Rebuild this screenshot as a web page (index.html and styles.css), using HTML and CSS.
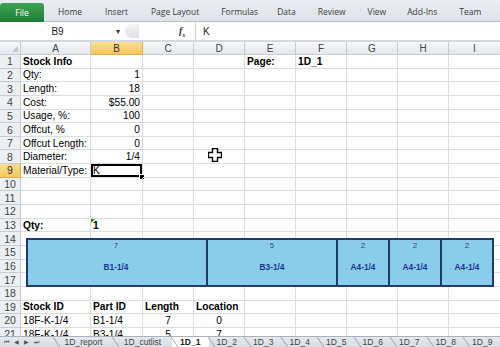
FILE: index.html
```html
<!DOCTYPE html>
<html lang="en">
<head>
    <meta charset="UTF-8">
    <title>1D_1 - Excel</title>
    <link rel="stylesheet" href="styles.css">
</head>
<body>
    <div class="ribbon">
        <div class="file-tab">File</div>
        <div class="tab t-home">Home</div>
        <div class="tab t-insert">Insert</div>
        <div class="tab t-layout">Page Layout</div>
        <div class="tab t-formulas">Formulas</div>
        <div class="tab t-data">Data</div>
        <div class="tab t-review">Review</div>
        <div class="tab t-view">View</div>
        <div class="tab t-addins">Add-Ins</div>
        <div class="tab t-team">Team</div>
    </div>

    <div class="formula-bar">
        <div class="name-box">B9<span class="drop">&#9662;</span></div>
        <div class="grip"></div>
        <div class="fx">f<sub>x</sub></div>
        <div class="formula">K</div>
    </div>

    <div class="sheet">
        <div class="row head">
            <div class="corner"></div>
            <div class="ch">A</div><div class="ch sel">B</div><div class="ch">C</div><div class="ch">D</div><div class="ch">E</div><div class="ch">F</div><div class="ch">G</div><div class="ch">H</div><div class="ch">I</div>
        </div>
        <div class="row"><div class="rh">1</div><div class="c b">Stock Info</div><div class="c"></div><div class="c"></div><div class="c"></div><div class="c b">Page:</div><div class="c b">1D_1</div><div class="c"></div><div class="c"></div><div class="c"></div></div>
        <div class="row"><div class="rh">2</div><div class="c">Qty:</div><div class="c r">1</div><div class="c"></div><div class="c"></div><div class="c"></div><div class="c"></div><div class="c"></div><div class="c"></div><div class="c"></div></div>
        <div class="row"><div class="rh">3</div><div class="c">Length:</div><div class="c r">18</div><div class="c"></div><div class="c"></div><div class="c"></div><div class="c"></div><div class="c"></div><div class="c"></div><div class="c"></div></div>
        <div class="row"><div class="rh">4</div><div class="c">Cost:</div><div class="c r">$55.00</div><div class="c"></div><div class="c"></div><div class="c"></div><div class="c"></div><div class="c"></div><div class="c"></div><div class="c"></div></div>
        <div class="row"><div class="rh">5</div><div class="c">Usage, %:</div><div class="c r">100</div><div class="c"></div><div class="c"></div><div class="c"></div><div class="c"></div><div class="c"></div><div class="c"></div><div class="c"></div></div>
        <div class="row"><div class="rh">6</div><div class="c">Offcut, %</div><div class="c r">0</div><div class="c"></div><div class="c"></div><div class="c"></div><div class="c"></div><div class="c"></div><div class="c"></div><div class="c"></div></div>
        <div class="row"><div class="rh">7</div><div class="c">Offcut Length:</div><div class="c r">0</div><div class="c"></div><div class="c"></div><div class="c"></div><div class="c"></div><div class="c"></div><div class="c"></div><div class="c"></div></div>
        <div class="row"><div class="rh">8</div><div class="c">Diameter:</div><div class="c r">1/4</div><div class="c"></div><div class="c"></div><div class="c"></div><div class="c"></div><div class="c"></div><div class="c"></div><div class="c"></div></div>
        <div class="row"><div class="rh sel">9</div><div class="c">Material/Type:</div><div class="c active">K</div><div class="c"></div><div class="c"></div><div class="c"></div><div class="c"></div><div class="c"></div><div class="c"></div><div class="c"></div></div>
        <div class="row"><div class="rh">10</div><div class="c"></div><div class="c"></div><div class="c"></div><div class="c"></div><div class="c"></div><div class="c"></div><div class="c"></div><div class="c"></div><div class="c"></div></div>
        <div class="row"><div class="rh">11</div><div class="c"></div><div class="c"></div><div class="c"></div><div class="c"></div><div class="c"></div><div class="c"></div><div class="c"></div><div class="c"></div><div class="c"></div></div>
        <div class="row"><div class="rh">12</div><div class="c"></div><div class="c"></div><div class="c"></div><div class="c"></div><div class="c"></div><div class="c"></div><div class="c"></div><div class="c"></div><div class="c"></div></div>
        <div class="row"><div class="rh">13</div><div class="c b">Qty:</div><div class="c b flag">1</div><div class="c"></div><div class="c"></div><div class="c"></div><div class="c"></div><div class="c"></div><div class="c"></div><div class="c"></div></div>
        <div class="row"><div class="rh">14</div><div class="c"></div><div class="c"></div><div class="c"></div><div class="c"></div><div class="c"></div><div class="c"></div><div class="c"></div><div class="c"></div><div class="c"></div></div>
        <div class="row"><div class="rh">15</div><div class="c"></div><div class="c"></div><div class="c"></div><div class="c"></div><div class="c"></div><div class="c"></div><div class="c"></div><div class="c"></div><div class="c"></div></div>
        <div class="row"><div class="rh">16</div><div class="c"></div><div class="c"></div><div class="c"></div><div class="c"></div><div class="c"></div><div class="c"></div><div class="c"></div><div class="c"></div><div class="c"></div></div>
        <div class="row"><div class="rh">17</div><div class="c"></div><div class="c"></div><div class="c"></div><div class="c"></div><div class="c"></div><div class="c"></div><div class="c"></div><div class="c"></div><div class="c"></div></div>
        <div class="row"><div class="rh">18</div><div class="c"></div><div class="c"></div><div class="c"></div><div class="c"></div><div class="c"></div><div class="c"></div><div class="c"></div><div class="c"></div><div class="c"></div></div>
        <div class="row"><div class="rh">19</div><div class="c b">Stock ID</div><div class="c b">Part ID</div><div class="c b">Length</div><div class="c b">Location</div><div class="c"></div><div class="c"></div><div class="c"></div><div class="c"></div><div class="c"></div></div>
        <div class="row"><div class="rh">20</div><div class="c">18F-K-1/4</div><div class="c">B1-1/4</div><div class="c m">7</div><div class="c m">0</div><div class="c"></div><div class="c"></div><div class="c"></div><div class="c"></div><div class="c"></div></div>
        <div class="row"><div class="rh">21</div><div class="c">18F-K-1/4</div><div class="c">B3-1/4</div><div class="c m">5</div><div class="c m">7</div><div class="c"></div><div class="c"></div><div class="c"></div><div class="c"></div><div class="c"></div></div>

        <!-- cut diagram: 26px per length unit -->
        <div class="cutbar">
            <div class="piece" style="width: 182px;"><span class="len">7</span><span class="part">B1-1/4</span></div>
            <div class="piece" style="width: 130px;"><span class="len">5</span><span class="part">B3-1/4</span></div>
            <div class="piece" style="width: 52px;"><span class="len">2</span><span class="part">A4-1/4</span></div>
            <div class="piece" style="width: 52px;"><span class="len">2</span><span class="part">A4-1/4</span></div>
            <div class="piece" style="width: 52px;"><span class="len">2</span><span class="part">A4-1/4</span></div>
        </div>

        <svg class="cursor" width="14" height="14" viewBox="0 0 14 14">
            <path d="M4.5 0.5h5v4h4v5h-4v4h-5v-4h-4v-5h4z" fill="#fff" stroke="#000" stroke-width="1.4"/>
        </svg>
    </div>

    <div class="sheet-tabs">
        <div class="nav">
            <span>&#9198;</span><span>&#9664;</span><span>&#9654;</span><span>&#9197;</span>
        </div>
        <div class="stab w1">1D_report</div>
        <div class="stab w1">1D_cutlist</div>
        <div class="stab active">1D_1</div>
        <div class="stab">1D_2</div>
        <div class="stab">1D_3</div>
        <div class="stab">1D_4</div>
        <div class="stab">1D_5</div>
        <div class="stab">1D_6</div>
        <div class="stab">1D_7</div>
        <div class="stab">1D_8</div>
        <div class="stab">1D_9</div>
    </div>
</body>
</html>
```

FILE: styles.css
```css
body {
    margin: 0;
    width: 500px;
    height: 347px;
    overflow: hidden;
    font-family: "Liberation Sans", Arial, sans-serif;
    background: #fff;
}

/* ribbon tabs */
.ribbon {
    height: 22px;
    box-sizing: border-box;
    display: flex;
    align-items: flex-end;
    background: linear-gradient(#e9edf2, #dfe4ea);
    border-bottom: 1px solid #b9c0ca;
    font-family: "Open Sans", sans-serif;
    font-size: 8.5px;
    color: #3c3c3c;
}
.file-tab {
    width: 44px;
    height: 19px;
    margin-bottom: -1px;
    display: flex;
    align-items: center;
    justify-content: center;
    color: #fff;
    background: linear-gradient(#3da352, #1f7d35);
    border-radius: 3px 3px 0 0;
}
.tab {
    height: 19px;
    display: flex;
    align-items: center;
    white-space: nowrap;
}
.t-home { margin-left: 14px; }
.t-insert { margin-left: 23px; }
.t-layout { margin-left: 23px; }
.t-formulas { margin-left: 22px; }
.t-data { margin-left: 19px; }
.t-review { margin-left: 22px; }
.t-view { margin-left: 22px; }
.t-addins { margin-left: 21px; }
.t-team { margin-left: 22px; }

/* formula bar */
.formula-bar {
    height: 20px;
    box-sizing: border-box;
    display: flex;
    align-items: center;
    background: #fff;
    border-bottom: 2px solid #d3d8df;
    font-size: 10px;
    color: #222;
}
.name-box {
    width: 125px;
    height: 100%;
    position: relative;
    display: flex;
    align-items: center;
    justify-content: center;
    padding-right: 10px;
    box-sizing: border-box;
}
.drop {
    position: absolute;
    right: 5px;
    font-size: 8px;
    color: #333;
}
.grip {
    width: 14px;
    height: 14px;
    border-radius: 7px 0 0 7px;
    background: linear-gradient(#f2f4f6, #dde1e6);
}
.fx {
    margin-left: 40px;
    width: 16px;
    font-family: "Liberation Serif", serif;
    font-style: italic;
    font-weight: bold;
    font-size: 10px;
    color: #333;
}
.fx sub {
    font-size: 6px;
}
.formula {
    flex: 1;
    height: 100%;
    display: flex;
    align-items: center;
    padding-left: 7px;
    border-left: 1px solid #d0d5dc;
}

/* grid */
.sheet {
    position: relative;
    height: 294px;
    overflow: hidden;
    font-size: 10.2px;
    color: #000;
}
.row {
    display: grid;
    grid-template-columns: 21px 70px 52px 51px 51px 51px 51px 51px 51px 52px;
    height: 13.65px;
}
.row.head {
    height: 13px;
}
.corner, .ch, .rh {
    box-sizing: border-box;
    background: linear-gradient(#f6f7f9, #e4e7ec);
    border-right: 1px solid #c6ccd4;
    border-bottom: 1px solid #c6ccd4;
    color: #444;
    display: flex;
    align-items: center;
    justify-content: center;
    overflow: hidden;
}
.ch {
    font-size: 10px;
}
.rh {
    font-size: 10.5px;
    background: #eceff3;
}
.ch.sel, .rh.sel {
    background: linear-gradient(#fbdf94, #f5c65a);
    border-color: #d8ad54;
    color: #333;
}
.corner {
    position: relative;
}
.corner::after {
    content: "";
    position: absolute;
    right: 2px;
    bottom: 2px;
    border-left: 6px solid transparent;
    border-bottom: 6px solid #c4c9d0;
}
.c {
    box-sizing: border-box;
    border-right: 1px solid #dadde2;
    border-bottom: 1px solid #dadde2;
    padding: 0 2px;
    display: flex;
    align-items: center;
    white-space: nowrap;
    position: relative;
}
.c.b { font-weight: bold; }
.c.r { justify-content: flex-end; }
.c.m { justify-content: center; }
.c.active {
    box-shadow: inset 0 0 0 2px #000;
    overflow: visible;
}
.c.active::after {
    content: "";
    position: absolute;
    right: -3px;
    bottom: -3px;
    width: 4px;
    height: 4px;
    background: #000;
    border: 1px solid #fff;
}
.c.flag::before {
    content: "";
    position: absolute;
    left: 0;
    top: 0;
    border-top: 4px solid #1c8a2e;
    border-right: 4px solid transparent;
}

/* cut diagram shape */
.cutbar {
    position: absolute;
    left: 26px;
    top: 196px;
    height: 49px;
    display: flex;
    box-sizing: border-box;
    border-top: 2px solid #1f3a6c;
    border-bottom: 2px solid #1f3a6c;
    border-left: 2px solid #1f3a6c;
    background: #89cdeb;
}
.piece {
    box-sizing: border-box;
    border-right: 2px solid #1f3a6c;
    display: flex;
    flex-direction: column;
    align-items: center;
    font-size: 8px;
}
.piece:first-child {
    margin-left: -2px;
}
.len {
    margin-top: 1px;
    color: #3a4a6a;
}
.part {
    margin-top: 12px;
    font-weight: bold;
    font-size: 8.3px;
    color: #1a3590;
}

.cursor {
    position: absolute;
    left: 208px;
    top: 106px;
}

/* sheet tabs */
.sheet-tabs {
    height: 11px;
    box-sizing: border-box;
    display: flex;
    align-items: center;
    background: linear-gradient(#e6e9ee, #d8dde4);
    border-top: 1px solid #aab2bd;
    font-size: 8.5px;
    line-height: 10px;
    color: #444;
    overflow: hidden;
    white-space: nowrap;
}
.nav {
    width: 54px;
    flex: none;
    display: flex;
    gap: 5px;
    padding-left: 4px;
    box-sizing: border-box;
    font-size: 6px;
    color: #555;
}
.stab {
    width: 36.5px;
    height: 10px;
    text-align: center;
    position: relative;
    flex: none;
}
.stab.w1 {
    width: 59px;
}
.stab::before {
    content: "";
    position: absolute;
    left: 2px;
    top: -1px;
    height: 12px;
    border-left: 1px solid #9aa3ae;
    transform: skewX(35deg);
}
.stab.active {
    font-weight: bold;
    background: #fff;
    color: #222;
}
```
